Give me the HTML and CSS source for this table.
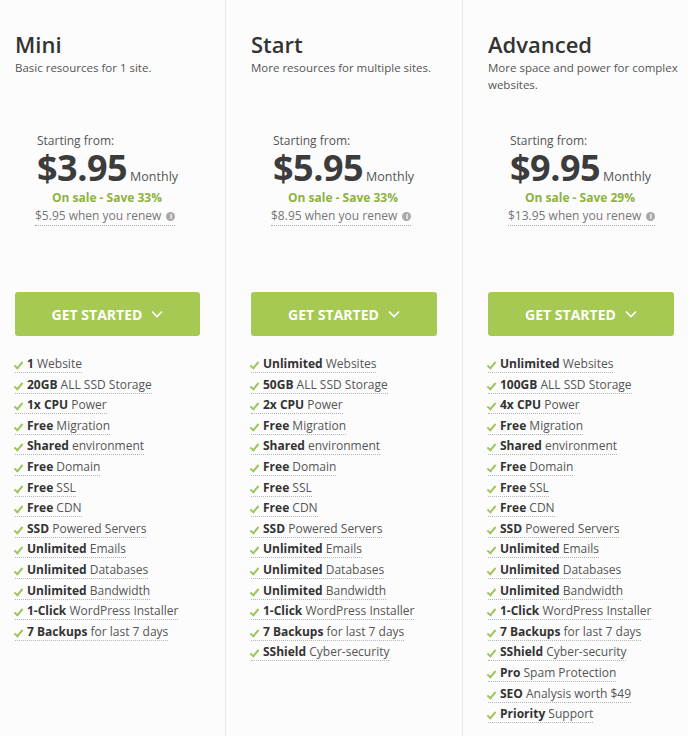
FILE: index.html
```html
<!DOCTYPE html>
<html>
<head>
<meta charset="utf-8">
<link rel="stylesheet" href="styles.css">
</head>
<body>
<div class="plans">
  <div class="plan plan-first">
    <div class="head">
      <h2 class="name">Mini</h2>
      <p class="desc">Basic resources for 1 site.</p>
    </div>
    <div class="price-box">
      <div class="from">Starting from:</div>
      <div class="price"><span class="amount">$3.95</span><span class="period">Monthly</span></div>
      <div class="sale">On sale - Save 33%</div>
      <div class="renew"><span class="renew-text">$5.95 when you renew <span class="info">i</span></span></div>
    </div>
    <div class="btn-wrap"><button class="btn">GET STARTED <svg class="chev" viewBox="0 0 12 8" width="12" height="8"><path d="M1 1.5 L6 6.5 L11 1.5" fill="none" stroke="#fff" stroke-width="1.6"/></svg></button></div>
    <ul class="features">
      <li><span class="f"><b>1</b> Website</span></li>
      <li><span class="f"><b>20GB</b> ALL SSD Storage</span></li>
      <li><span class="f"><b>1x CPU</b> Power</span></li>
      <li><span class="f"><b>Free</b> Migration</span></li>
      <li><span class="f"><b>Shared</b> environment</span></li>
      <li><span class="f"><b>Free</b> Domain</span></li>
      <li><span class="f"><b>Free</b> SSL</span></li>
      <li><span class="f"><b>Free</b> CDN</span></li>
      <li><span class="f"><b>SSD</b> Powered Servers</span></li>
      <li><span class="f"><b>Unlimited</b> Emails</span></li>
      <li><span class="f"><b>Unlimited</b> Databases</span></li>
      <li><span class="f"><b>Unlimited</b> Bandwidth</span></li>
      <li><span class="f"><b>1-Click</b> WordPress Installer</span></li>
      <li><span class="f"><b>7 Backups</b> for last 7 days</span></li>
    </ul>
  </div>
  <div class="plan">
    <div class="head">
      <h2 class="name">Start</h2>
      <p class="desc">More resources for multiple sites.</p>
    </div>
    <div class="price-box">
      <div class="from">Starting from:</div>
      <div class="price"><span class="amount">$5.95</span><span class="period">Monthly</span></div>
      <div class="sale">On sale - Save 33%</div>
      <div class="renew"><span class="renew-text">$8.95 when you renew <span class="info">i</span></span></div>
    </div>
    <div class="btn-wrap"><button class="btn">GET STARTED <svg class="chev" viewBox="0 0 12 8" width="12" height="8"><path d="M1 1.5 L6 6.5 L11 1.5" fill="none" stroke="#fff" stroke-width="1.6"/></svg></button></div>
    <ul class="features">
      <li><span class="f"><b>Unlimited</b> Websites</span></li>
      <li><span class="f"><b>50GB</b> ALL SSD Storage</span></li>
      <li><span class="f"><b>2x CPU</b> Power</span></li>
      <li><span class="f"><b>Free</b> Migration</span></li>
      <li><span class="f"><b>Shared</b> environment</span></li>
      <li><span class="f"><b>Free</b> Domain</span></li>
      <li><span class="f"><b>Free</b> SSL</span></li>
      <li><span class="f"><b>Free</b> CDN</span></li>
      <li><span class="f"><b>SSD</b> Powered Servers</span></li>
      <li><span class="f"><b>Unlimited</b> Emails</span></li>
      <li><span class="f"><b>Unlimited</b> Databases</span></li>
      <li><span class="f"><b>Unlimited</b> Bandwidth</span></li>
      <li><span class="f"><b>1-Click</b> WordPress Installer</span></li>
      <li><span class="f"><b>7 Backups</b> for last 7 days</span></li>
      <li><span class="f"><b>SShield</b> Cyber-security</span></li>
    </ul>
  </div>
  <div class="plan">
    <div class="head">
      <h2 class="name">Advanced</h2>
      <p class="desc">More space and power for complex websites.</p>
    </div>
    <div class="price-box">
      <div class="from">Starting from:</div>
      <div class="price"><span class="amount">$9.95</span><span class="period">Monthly</span></div>
      <div class="sale">On sale - Save 29%</div>
      <div class="renew"><span class="renew-text">$13.95 when you renew <span class="info">i</span></span></div>
    </div>
    <div class="btn-wrap"><button class="btn">GET STARTED <svg class="chev" viewBox="0 0 12 8" width="12" height="8"><path d="M1 1.5 L6 6.5 L11 1.5" fill="none" stroke="#fff" stroke-width="1.6"/></svg></button></div>
    <ul class="features">
      <li><span class="f"><b>Unlimited</b> Websites</span></li>
      <li><span class="f"><b>100GB</b> ALL SSD Storage</span></li>
      <li><span class="f"><b>4x CPU</b> Power</span></li>
      <li><span class="f"><b>Free</b> Migration</span></li>
      <li><span class="f"><b>Shared</b> environment</span></li>
      <li><span class="f"><b>Free</b> Domain</span></li>
      <li><span class="f"><b>Free</b> SSL</span></li>
      <li><span class="f"><b>Free</b> CDN</span></li>
      <li><span class="f"><b>SSD</b> Powered Servers</span></li>
      <li><span class="f"><b>Unlimited</b> Emails</span></li>
      <li><span class="f"><b>Unlimited</b> Databases</span></li>
      <li><span class="f"><b>Unlimited</b> Bandwidth</span></li>
      <li><span class="f"><b>1-Click</b> WordPress Installer</span></li>
      <li><span class="f"><b>7 Backups</b> for last 7 days</span></li>
      <li><span class="f"><b>SShield</b> Cyber-security</span></li>
      <li><span class="f"><b>Pro</b> Spam Protection</span></li>
      <li><span class="f"><b>SEO</b> Analysis worth $49</span></li>
      <li><span class="f"><b>Priority</b> Support</span></li>
    </ul>
  </div>
</div>
</body>
</html>
```

FILE: styles.css
```css
* { box-sizing: border-box; }
html, body {
  margin: 0;
  padding: 0;
  background: #fcfcfc;
  font-family: "Open Sans", "Noto Sans", sans-serif;
  color: #444;
}
.plans {
  display: grid;
  grid-template-columns: 225px 237px 226px;
  height: 736px;
}
.plan {
  border-left: 1px solid #e4e4e4;
  padding: 30px 0 0 25px;
}
.plan-first {
  border-left: none;
  padding-left: 15px;
}
.head { height: 103px; }
.name {
  margin: 0;
  font-size: 22px;
  line-height: 28px;
  font-weight: 600;
  color: #333;
}
.desc {
  margin: 1px 0 0;
  font-size: 11.5px;
  line-height: 17px;
  color: #555;
}
.price-box {
  margin-left: 22px;
  width: 140px;
  height: 159px;
}
.from {
  font-size: 12px;
  line-height: 16px;
  color: #555;
}
.price {
  display: flex;
  align-items: baseline;
  height: 38px;
  line-height: 38px;
  white-space: nowrap;
}
.amount {
  font-size: 36px;
  font-weight: 700;
  color: #3c3c3c;
  letter-spacing: -0.5px;
}
.period {
  font-size: 12.5px;
  color: #555;
  margin-left: 3px;
}
.sale {
  font-size: 12px;
  line-height: 18px;
  font-weight: 700;
  color: #8db23f;
  text-align: center;
  white-space: nowrap;
  margin-top: 2px;
}
.renew {
  margin-left: -2px;
  font-size: 12px;
  line-height: 17px;
  color: #777;
  white-space: nowrap;
}
.renew-text { border-bottom: 1px dotted #aaa; padding-bottom: 1px; }
.info {
  display: inline-block;
  width: 9px;
  height: 9px;
  border-radius: 50%;
  background: #a9a9a9;
  color: #fff;
  font-size: 7px;
  line-height: 9px;
  font-weight: 700;
  text-align: center;
  vertical-align: 1px;
  margin-left: 2px;
}
.btn-wrap { height: 63px; }
.btn {
  width: 186px;
  height: 44px;
  border: none;
  border-radius: 3px;
  background: #a6c954;
  color: #fff;
  font-family: inherit;
  font-size: 14px;
  font-weight: 700;
  display: flex;
  align-items: center;
  justify-content: center;
  gap: 9px;
  padding: 0;
}
.plan-first .btn { width: 185px; }
.features {
  list-style: none;
  margin: 0;
  padding: 0;
}
.features li {
  height: 20.6px;
  font-size: 12px;
  line-height: 17px;
  color: #555;
}
.f {
  display: inline-block;
  border-bottom: 1px dotted #b5b5b5;
  padding-left: 12px;
  position: relative;
}
.f::before {
  content: "";
  position: absolute;
  left: 1px;
  top: 5px;
  width: 3px;
  height: 7px;
  border: solid #a0c55c;
  border-width: 0 2px 2px 0;
  transform: rotate(40deg);
}
.f b { color: #333; font-weight: 700; }
```
